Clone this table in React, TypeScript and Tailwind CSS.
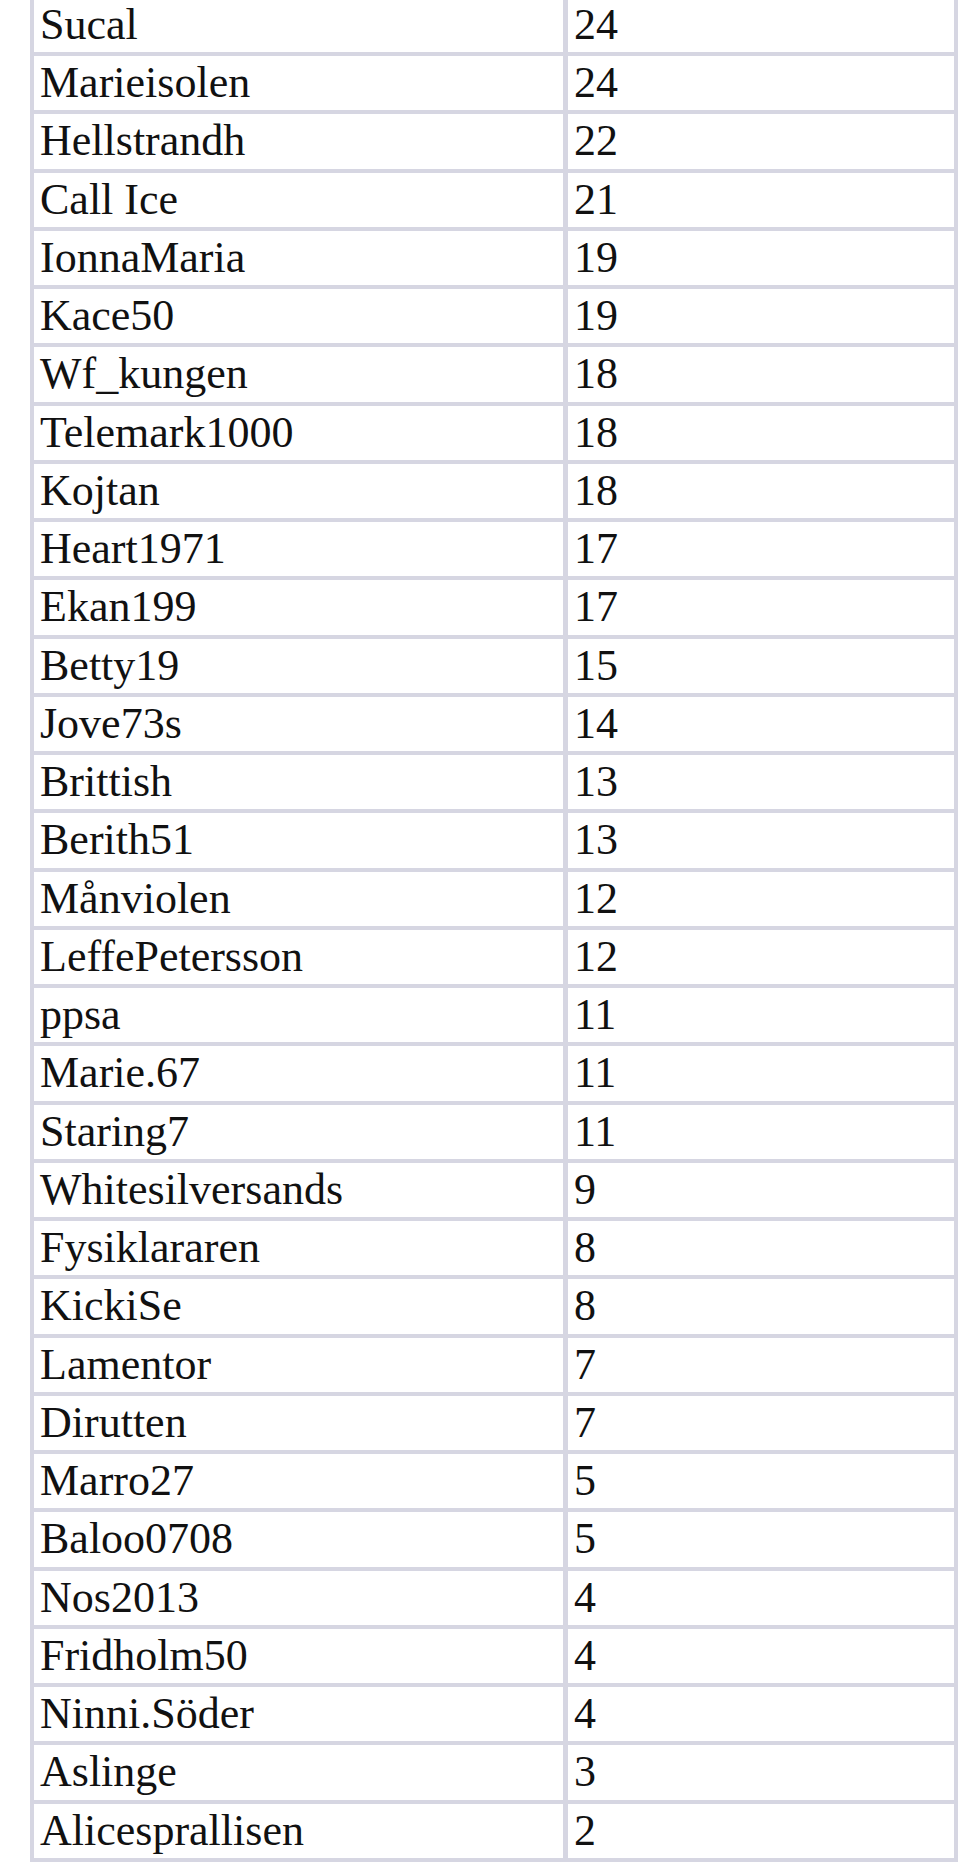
import React from "react";

const rows: [string, string][] = [
  ["Sucal", "24"],
  ["Marieisolen", "24"],
  ["Hellstrandh", "22"],
  ["Call Ice", "21"],
  ["IonnaMaria", "19"],
  ["Kace50", "19"],
  ["Wf_kungen", "18"],
  ["Telemark1000", "18"],
  ["Kojtan", "18"],
  ["Heart1971", "17"],
  ["Ekan199", "17"],
  ["Betty19", "15"],
  ["Jove73s", "14"],
  ["Brittish", "13"],
  ["Berith51", "13"],
  ["Månviolen", "12"],
  ["LeffePetersson", "12"],
  ["ppsa", "11"],
  ["Marie.67", "11"],
  ["Staring7", "11"],
  ["Whitesilversands", "9"],
  ["Fysiklararen", "8"],
  ["KickiSe", "8"],
  ["Lamentor", "7"],
  ["Dirutten", "7"],
  ["Marro27", "5"],
  ["Baloo0708", "5"],
  ["Nos2013", "4"],
  ["Fridholm50", "4"],
  ["Ninni.Söder", "4"],
  ["Aslinge", "3"],
  ["Alicesprallisen", "2"],
];

export default function App() {
  return (
    <div className="w-[974px] h-[1870px] overflow-hidden bg-white">
      <div
        className="ml-[30px] mt-[-6.25px] w-[928px] bg-[#d6d6e2] p-[4px] flex flex-col gap-[4px] text-[44px] text-[#111] leading-none"
        style={{ fontFamily: '"Liberation Serif", "Times New Roman", serif' }}
      >
        {rows.map(([name, n]) => (
          <div key={name} className="grid grid-cols-[529px_386px] gap-[5px] h-[54.25px]">
            <div className="bg-white flex items-center pl-[6px] whitespace-nowrap">{name}</div>
            <div className="bg-white flex items-center pl-[6px]">{n}</div>
          </div>
        ))}
      </div>
    </div>
  );
}
